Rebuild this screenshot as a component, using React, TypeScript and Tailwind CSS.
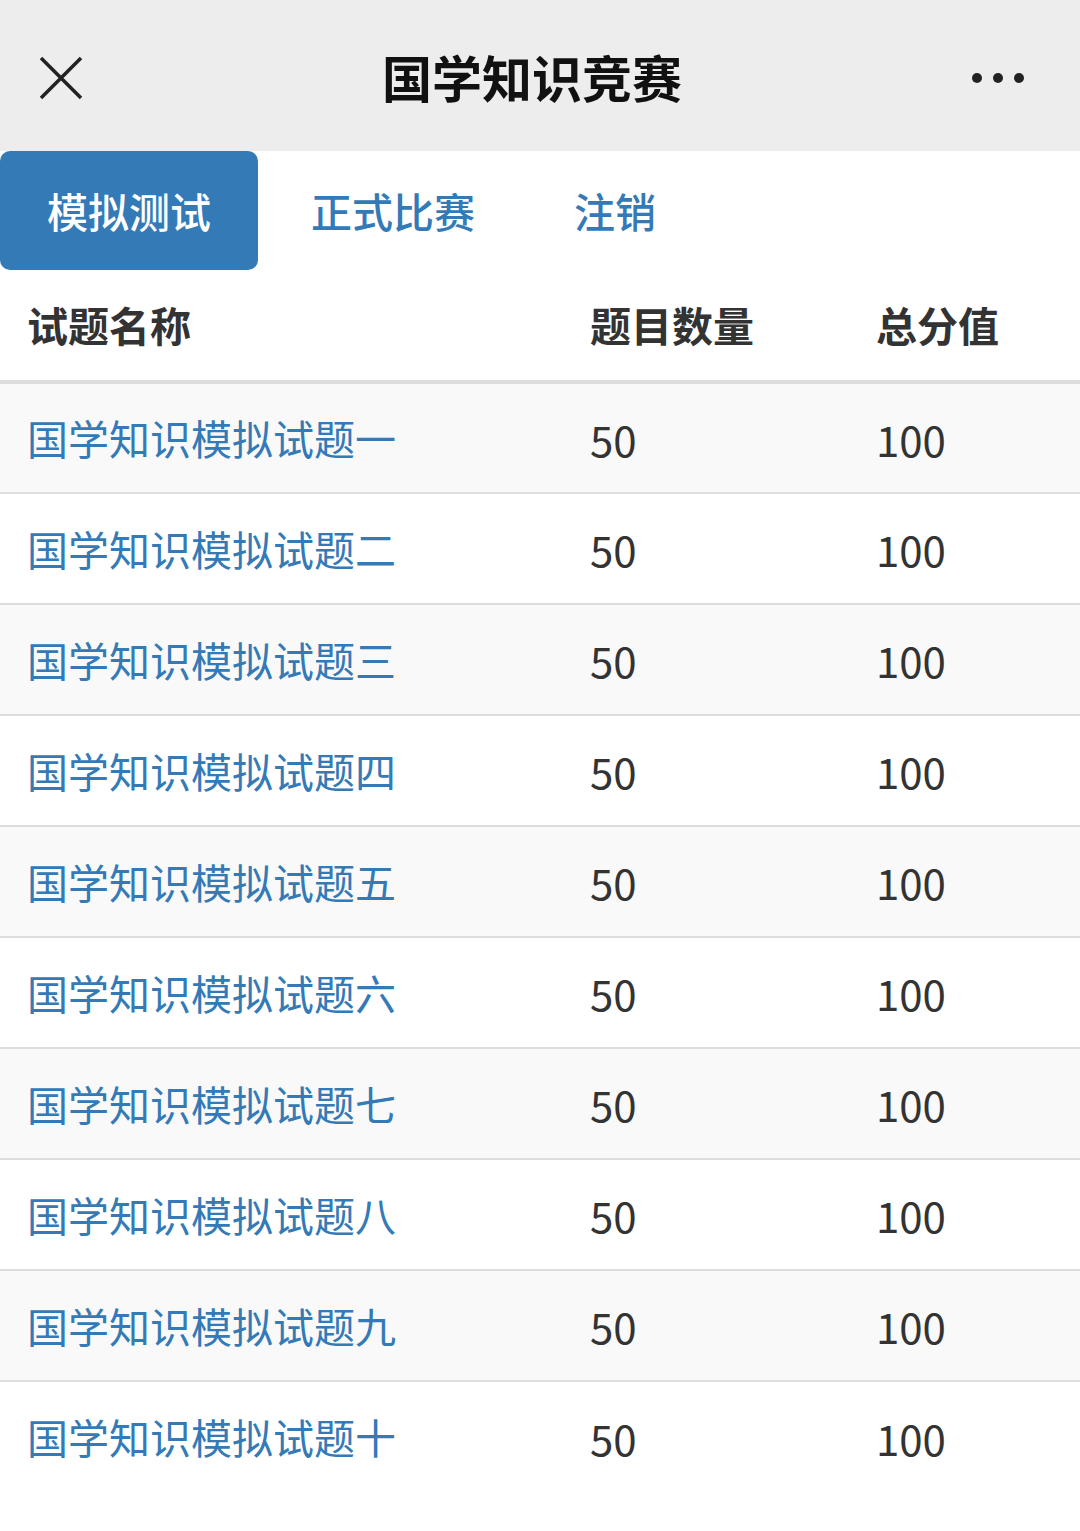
import React from "react";

const nums = ["一", "二", "三", "四", "五", "六", "七", "八", "九", "十"];

export default function App() {
  return (
    <div
      className="w-[1080px] min-h-[1531px] bg-white"
      style={{ fontFamily: '"Noto Sans CJK SC", "Noto Sans", sans-serif' }}
    >
      {/* top bar */}
      <header className="h-[151px] bg-[#ededed] flex items-center justify-between px-[38px]">
        <svg width="46" height="46" viewBox="0 0 46 46" className="mt-[4px]">
          <path d="M3 3 L43 43 M43 3 L3 43" stroke="#222" strokeWidth="3.5" fill="none" />
        </svg>
        <h1 className="text-[50px] font-bold text-[#111] leading-none ml-[8px]">国学知识竞赛</h1>
        <div className="flex gap-[11px] items-center mr-[18px] mt-[4px]">
          <span className="w-[10px] h-[10px] rounded-full bg-[#222]" />
          <span className="w-[10px] h-[10px] rounded-full bg-[#222]" />
          <span className="w-[10px] h-[10px] rounded-full bg-[#222]" />
        </div>
      </header>

      {/* tabs */}
      <nav className="flex h-[119px] items-stretch">
        <div className="w-[258px] bg-[#337ab7] rounded-[10px] flex items-center justify-center text-white text-[41px] font-medium">
          模拟测试
        </div>
        <div className="w-[270px] flex items-center justify-center text-[#337ab7] text-[41px] font-medium">
          正式比赛
        </div>
        <div className="w-[174px] flex items-center justify-center text-[#337ab7] text-[41px] font-medium">
          注销
        </div>
      </nav>

      {/* table */}
      <table className="w-full table-fixed border-collapse text-[41px]">
        <colgroup>
          <col className="w-[590px]" />
          <col className="w-[286px]" />
          <col />
        </colgroup>
        <thead>
          <tr className="h-[112px] border-b-[4px] border-[#dddddd]">
            <th className="text-left font-bold text-[#333] pl-[27px]">试题名称</th>
            <th className="text-left font-bold text-[#333]">题目数量</th>
            <th className="text-left font-bold text-[#333]">总分值</th>
          </tr>
        </thead>
        <tbody>
          {nums.map((n, i) => (
            <tr
              key={n}
              className={`h-[111px] ${i < 9 ? "border-b-2 border-[#dddddd]" : ""} ${i % 2 === 0 ? "bg-[#f9f9f9]" : "bg-white"}`}
            >
              <td className="pl-[27px] text-[#337ab7] whitespace-nowrap">国学知识模拟试题{n}</td>
              <td className="text-[#333] text-[42px]">50</td>
              <td className="text-[#333] text-[42px]">100</td>
            </tr>
          ))}
        </tbody>
      </table>
    </div>
  );
}
